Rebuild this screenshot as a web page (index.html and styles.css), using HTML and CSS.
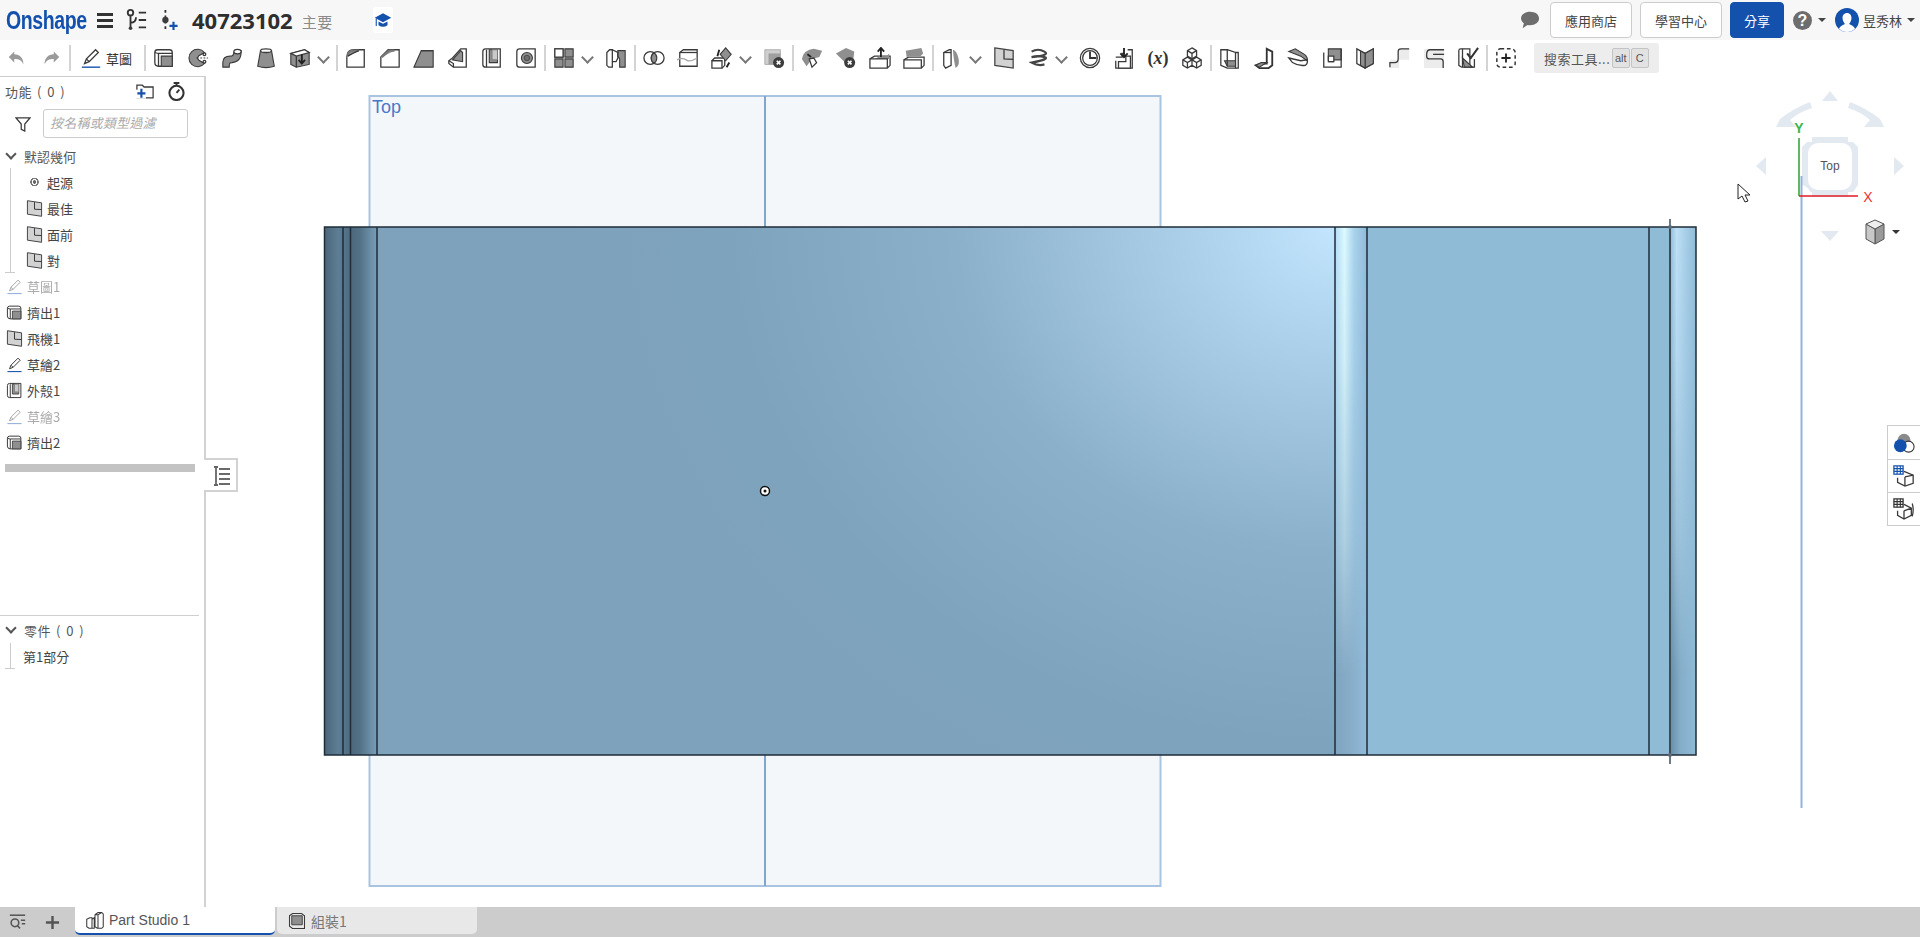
FILE: index.html
```html
<!DOCTYPE html>
<html lang="zh-Hant">
<head>
  <meta charset="UTF-8" />
  <title>40723102 - Part Studio 1</title>
  <link rel="stylesheet" href="styles.css">
</head>
<body>

  <!-- icon set -->
  <svg class="defs" width="0" height="0">
    <defs>
      <symbol id="i-undo" viewBox="0 0 24 24"><path class="g" d="M9 5 3 11l6 6v-4c5 0 8 1 10 6 0-7-4-11-10-11z"/></symbol>
      <symbol id="i-redo" viewBox="0 0 24 24"><path class="g" d="M15 5l6 6-6 6v-4c-5 0-8 1-10 6 0-7 4-11 10-11z"/></symbol>
      <symbol id="i-pencil" viewBox="0 0 24 24"><path class="o" d="M5 18 7 13 17 3l3 3L10 16z"/><path class="o" d="M7 13l3 3"/><path class="blue" d="M2 22h20"/></symbol>
      <symbol id="i-extrude" viewBox="0 0 24 24"><path class="o" d="M2 6q0-3 3-3h13q3 0 3 3v15H6q-4 0-4-4z"/><path class="o" d="M2 6q3 1 4 1h15M6 7v14"/><path class="f" d="M9 10h12v11H9z"/></symbol>
      <symbol id="i-revolve" viewBox="0 0 24 24"><path class="f" d="M19 6A9.5 9.5 0 1 0 19 18L13 14.500 11 12 13 9.500z"/><path class="dash" d="M11 12h12"/><circle class="o" cx="19" cy="8" r="1.500"/><circle class="o" cx="19" cy="16" r="1.500"/></symbol>
      <symbol id="i-sweep" viewBox="0 0 24 24"><path class="f" d="M2 22v-5c0-6 4-7 8-7 3 0 4-1 4-4l8-2c0 9-3 12-10 13-3 0-3 1-3 5z"/><ellipse class="lt" cx="18" cy="5" rx="4" ry="2.500"/></symbol>
      <symbol id="i-loft" viewBox="0 0 24 24"><path class="f" d="M6 4 3 21q9 3 18 0L18 4z"/><ellipse class="lt" cx="12" cy="4" rx="6" ry="2"/></symbol>
      <symbol id="i-thicken" viewBox="0 0 24 24"><path class="f" d="M2 7l15-4 5 3v13l-14 3-6-3z"/><path class="lt" d="M2 7l6 3 14-4-5-3zM8 10v12"/><path class="k" d="M14 8v9M10.500 14l3.500 4 3.500-4"/></symbol>
      <symbol id="i-fillet" viewBox="0 0 24 24"><path class="o" d="M2 22V11q0-8 8-8h11v19z"/><path class="thick" d="M3 10q0-6 7-6h5"/><path class="o" d="M3 10q5-3 12-6"/></symbol>
      <symbol id="i-chamfer" viewBox="0 0 24 24"><path class="o" d="M2 22V11l8-8h12v19z"/><path class="thick" d="M3 11l8-7h6"/></symbol>
      <symbol id="i-draft" viewBox="0 0 24 24"><path class="f" d="M1 22 9 4h13v18z"/><path class="lt" d="M9 4h13"/></symbol>
      <symbol id="i-rib" viewBox="0 0 24 24"><path class="lt" d="M2 15l4-3 9-10h6v20H7l-5-4z"/><path class="f" d="M6 14 15 4l2 2v10z"/><path class="o" d="M2 15l5 3v4"/></symbol>
      <symbol id="i-shell" viewBox="0 0 24 24"><path class="lt" d="M2 5q0-3 3-3h16v20H5q-3 0-3-3z"/><path class="o" d="M6 3v19"/><path class="f" d="M9 3h9v14H9z"/><path class="inner" d="M12 3v11h6V3z"/></symbol>
      <symbol id="i-hole" viewBox="0 0 24 24"><path class="lt" d="M2 5q0-3 3-3h17v20H5q-3 0-3-3z"/><circle class="f" cx="13" cy="12" r="6"/><circle class="inner2" cx="13" cy="12" r="3"/></symbol>
      <symbol id="i-pattern" viewBox="0 0 24 24"><path class="f" d="M2 2h9v9H2zM13 2h9v9h-9zM2 13h9v9H2zM13 13h9v9h-9z"/><path class="lt" d="M2 2h9v9H2z"/></symbol>
      <symbol id="i-split" viewBox="0 0 24 24"><path class="lt" d="M2 6l3-3h3v19H4l-2-2z"/><path class="f" d="M14 4h8v18h-6v-9l-2-3z"/><path class="o" d="M8 3l6 3v6l-2 4h-4"/></symbol>
      <symbol id="i-bool" viewBox="0 0 24 24"><circle class="lt" cx="8" cy="12" r="7"/><circle class="lt" cx="16" cy="12" r="7"/><path class="f" d="M12 6.200a7 7 0 0 1 0 11.600 7 7 0 0 1 0-11.600z"/></symbol>
      <symbol id="i-splitsurf" viewBox="0 0 24 24"><path class="o" d="M3 6l4-3h15v18H3z"/><path class="o" d="M3 6h19"/><path class="wave" d="M0 14q6-3 10 0t12-2"/></symbol>
      <symbol id="i-transform" viewBox="0 0 24 24"><path class="lt" d="M1 15h11v8H1z"/><path class="o" d="M1 15l3-3h11v8l-3 3"/><path class="f" d="M16 1l6 7-6 7-6-7z"/><path class="k" d="M7 10l2-7M20 17l-3 5"/></symbol>
      <symbol id="i-delete" viewBox="0 0 24 24"><path class="lgf" d="M2 3h17v16H2z"/><path class="lgf2" d="M6 7h13v12H6z"/><circle class="kf" cx="17" cy="17" r="6"/><path class="x" d="M15 15l4 4M19 15l-4 4"/></symbol>
      <symbol id="i-surfmove" viewBox="0 0 24 24"><path class="g2" d="M1 13Q3 3 14 2l9 2-3 7-8 2-6 8z"/><path class="lt" d="M9 13l5-1 3 5-5 5z"/><path class="k" d="M7 8l4 3"/></symbol>
      <symbol id="i-surfdel" viewBox="0 0 24 24"><path class="g2" d="M1 7 12 1l9 4-1 9-9 3z"/><circle class="kf" cx="16" cy="17" r="6"/><path class="x" d="M14 15l4 4M18 15l-4 4"/></symbol>
      <symbol id="i-facemove" viewBox="0 0 24 24"><path class="lt" d="M1 13l5-3h17v10l-3 3H1z"/><path class="g2" d="M7 13l4-3h8l3-3v6z"/><path class="k" d="M13 11V1M9.500 5 13 1l3.500 4"/><path class="o" d="M1 13h19v10"/></symbol>
      <symbol id="i-surfoff" viewBox="0 0 24 24"><path class="lt" d="M1 14l5-3h17v9l-3 3H1z"/><path class="o" d="M1 14h19v9"/><path class="g2" d="M3 4l17-3 2 6-3 3H8l-4 1z"/></symbol>
      <symbol id="i-enclose" viewBox="0 0 24 24"><path class="lt" d="M3 6l6-3h2v17l-6 3-2-3z"/><path class="g2" d="M13 3q4 1 6 9t-3 11q-2-7-3-20z"/><path class="o" d="M3 6h8"/></symbol>
      <symbol id="i-plane" viewBox="0 0 24 24"><path class="lgp" d="M2 1l20 3v19L2 20z"/><path class="o" d="M12 3v10l10 .5"/></symbol>
      <symbol id="i-helix" viewBox="0 0 24 24"><path class="coil" d="M5 5q7-4 14 0t-14 6q7-2 14 0t-14 6q7 4 14 2"/></symbol>
      <symbol id="i-clock" viewBox="0 0 24 24"><circle class="o" cx="12" cy="12" r="10.500"/><circle class="o" cx="12" cy="12" r="8"/><path class="o2" d="M12 5v7h7"/></symbol>
      <symbol id="i-import" viewBox="0 0 24 24"><path class="o" d="M3 11h7V7h3M16 3h5v20H3v-8"/><path class="lt" d="M6 23v-7h8v-6h5v13z"/><path class="k" d="M12 1v10M8 7l4 4 4-4"/></symbol>
      <symbol id="i-cubes" viewBox="0 0 24 24"><path class="lt" d="M12 1l5 3v6l-5 3-5-3V4zM7 11l5 3v6l-5 3-5-3v-6zM17 11l5 3v6l-5 3-5-3v-6z"/><path class="o" d="M7 4l5 3 5-3M12 7v6M2 14l5 3 5-3M7 17v6M12 14l5 3 5-3M17 17v6"/></symbol>
      <symbol id="i-sheet" viewBox="0 0 24 24"><path class="lt" d="M2 3h7l9 3v17H9l-7-3z"/><path class="f" d="M6 15l3 6h9v-6z"/><path class="o" d="M9 3v18M18 6h3v17h-3"/></symbol>
      <symbol id="i-flange" viewBox="0 0 24 24"><path class="k2" d="M15 2l6 3v15l-4 3H7l-4-3 6-2h6z"/><path class="f" d="M3 20l6-3h6l-8 5z"/></symbol>
      <symbol id="i-hem" viewBox="0 0 24 24"><path class="f" d="M2 5l7-3 10 6q4 3 3 7l-7-5z"/><path class="o" d="M2 12l13 3 7-1q1 4-2 6-8 1-14-3z"/></symbol>
      <symbol id="i-tab" viewBox="0 0 24 24"><path class="f" d="M8 2h14v12H8z"/><path class="lt" d="M8 10h6v6H8z"/><path class="o" d="M3 6v16h19V2M8 16h6"/></symbol>
      <symbol id="i-bend" viewBox="0 0 24 24"><path class="lt" d="M2 2l9 5 9-5v16l-9 5-9-5z"/><path class="f" d="M11 7l9-5v16l-9 5z"/><path class="f" d="M6 4.500 11 7v16l-5-3z"/></symbol>
      <symbol id="i-jog" viewBox="0 0 24 24"><path class="bgl" d="M1 14h10v9H1zM11 2h11v12H11z"/><path class="o" d="M1 22v-5h5q4 0 4-4V5q0-3 3-3h9"/></symbol>
      <symbol id="i-corner" viewBox="0 0 24 24"><path class="bgl" d="M1 2h22v21H1z"/><path class="o" d="M23 3H8Q4 3 4 8v2q0 3 3 3h12q3 0 3 3v7"/><path class="o" d="M23 8H11"/></symbol>
      <symbol id="i-finish" viewBox="0 0 24 24"><path class="lt" d="M2 4q0-2 2-2h10v20H5l-3-2z"/><path class="f" d="M6 12l11 10h-9z"/><path class="o" d="M6 2v20M14 22h5v-9"/><path class="k3" d="M11 7l4 5 8-11"/></symbol>
      <symbol id="i-add" viewBox="0 0 24 24"><rect class="dashbox" x="2" y="2" width="20" height="20" rx="4"/><path class="k" d="M12 7v10M7 12h10"/></symbol>
      <symbol id="i-assembly" viewBox="0 0 24 24"><path class="o" d="M2 5l4-3h12l4 3v17H6l-4-3z"/><path class="f" d="M5 5h14v12H5z"/></symbol>
      <symbol id="i-studio" viewBox="0 0 24 24"><path class="o" d="M1 11l4-2h3v14H4l-3-2zM8 11l3-2v14H8M12 5l4-3h5l2 2v17l-2 2h-6l-3-2zM16 5v18M12 5h4l5-3"/></symbol>
    </defs>
  </svg>

  <header class="topbar">
    <span class="logo-box"><a class="logo">Onshape</a></span>
    <span class="burger"><i></i><i></i><i></i></span>
    <svg class="top-ic ic-branch" viewBox="0 0 24 24"><circle class="o2" cx="6" cy="4" r="3"/><path class="o2" d="M6 7v14M6 15q6 0 6-6"/><circle class="kf" cx="6" cy="21" r="2"/><path class="o2" d="M15 4h8M15 12h8M15 20h8"/></svg>
    <svg class="top-ic ic-version" viewBox="0 0 20 24"><path class="dash2" d="M6 1v22"/><circle class="kf" cx="6" cy="12" r="3.500"/><path class="plus" d="M15 14v9M10.500 18.500h9"/></svg>
    <span class="doc-title">40723102</span>
    <span class="doc-branch">主要</span>
    <span class="cap-tile">
      <svg viewBox="0 0 24 24"><path class="capf" d="M12 3 1 9l11 6 11-6zM6 14v5q6 4 12 0v-5l-6 3z"/><path class="capl" d="M3 10v10"/></svg>
    </span>

    <div class="top-right">
      <svg class="bubble" viewBox="0 0 24 22"><path class="kb" d="M12 1C5.500 1 1 4.500 1 9c0 2.500 1.500 4.500 3.500 6L3 21l6-4c1 .2 2 .3 3 .3 6.500 0 11-3.500 11-8.200S18.500 1 12 1z"/></svg>
      <button class="btn">應用商店</button>
      <button class="btn">學習中心</button>
      <button class="btn btn-share">分享</button>
      <span class="help">?</span>
      <span class="caret"></span>
      <svg class="avatar" viewBox="0 0 24 24"><circle class="av-b" cx="12" cy="12" r="12"/><path class="av-w" d="M12 5c-3 0-4.500 2.500-4.500 5s1.500 5 2.500 6c-2 1-5 2-6 4.500 2 2.500 5 3.500 8 3.500s6-1 8-3.500c-1-2.500-4-3.500-6-4.500 1-1 2.500-3.500 2.500-6S15 5 12 5z"/></svg>
      <span class="user">昱秀林</span>
      <span class="caret"></span>
    </div>
  </header>

  <nav class="toolbar">
    <span class="tool"><svg><use href="#i-undo"/></svg></span>
    <span class="tool"><svg><use href="#i-redo"/></svg></span>
    <span class="sep"></span>
    <span class="tool-sketch"><svg><use href="#i-pencil"/></svg><span>草圖</span></span>
    <span class="sep"></span>
    <span class="tool"><svg><use href="#i-extrude"/></svg></span>
    <span class="tool"><svg><use href="#i-revolve"/></svg></span>
    <span class="tool"><svg><use href="#i-sweep"/></svg></span>
    <span class="tool"><svg><use href="#i-loft"/></svg></span>
    <span class="tool"><svg><use href="#i-thicken"/></svg></span>
    <span class="chev"></span>
    <span class="sep"></span>
    <span class="tool"><svg><use href="#i-fillet"/></svg></span>
    <span class="tool"><svg><use href="#i-chamfer"/></svg></span>
    <span class="tool"><svg><use href="#i-draft"/></svg></span>
    <span class="tool"><svg><use href="#i-rib"/></svg></span>
    <span class="tool"><svg><use href="#i-shell"/></svg></span>
    <span class="tool"><svg><use href="#i-hole"/></svg></span>
    <span class="sep"></span>
    <span class="tool"><svg><use href="#i-pattern"/></svg></span>
    <span class="chev"></span>
    <span class="tool"><svg><use href="#i-split"/></svg></span>
    <span class="sep"></span>
    <span class="tool"><svg><use href="#i-bool"/></svg></span>
    <span class="tool"><svg><use href="#i-splitsurf"/></svg></span>
    <span class="tool"><svg><use href="#i-transform"/></svg></span>
    <span class="chev"></span>
    <span class="tool"><svg><use href="#i-delete"/></svg></span>
    <span class="sep"></span>
    <span class="tool"><svg><use href="#i-surfmove"/></svg></span>
    <span class="tool"><svg><use href="#i-surfdel"/></svg></span>
    <span class="tool"><svg><use href="#i-facemove"/></svg></span>
    <span class="tool"><svg><use href="#i-surfoff"/></svg></span>
    <span class="sep"></span>
    <span class="tool"><svg><use href="#i-enclose"/></svg></span>
    <span class="chev"></span>
    <span class="tool"><svg><use href="#i-plane"/></svg></span>
    <span class="tool"><svg><use href="#i-helix"/></svg></span>
    <span class="chev"></span>
    <span class="tool"><svg><use href="#i-clock"/></svg></span>
    <span class="tool"><svg><use href="#i-import"/></svg></span>
    <span class="tool var">(<i>x</i>)</span>
    <span class="tool"><svg><use href="#i-cubes"/></svg></span>
    <span class="sep"></span>
    <span class="tool"><svg><use href="#i-sheet"/></svg></span>
    <span class="tool"><svg><use href="#i-flange"/></svg></span>
    <span class="tool"><svg><use href="#i-hem"/></svg></span>
    <span class="tool"><svg><use href="#i-tab"/></svg></span>
    <span class="tool"><svg><use href="#i-bend"/></svg></span>
    <span class="tool"><svg><use href="#i-jog"/></svg></span>
    <span class="tool"><svg><use href="#i-corner"/></svg></span>
    <span class="tool"><svg><use href="#i-finish"/></svg></span>
    <span class="sep"></span>
    <span class="tool"><svg><use href="#i-add"/></svg></span>
    <div class="tool-search"><span class="search-label">搜索工具...</span><kbd>alt</kbd><kbd>C</kbd></div>
  </nav>

  <main class="workspace">
    <aside class="panel">
      <div class="panel-head">
        <span class="panel-title">功能 ( 0 )</span>
        <svg class="head-ic folder" viewBox="0 0 20 16"><path class="o" d="M1 15V1h6l2 2h10v12z"/><path class="whitef" d="M0 6h11v10H0z"/><path class="plus" d="M6 5v10M1.500 10h9"/></svg>
        <svg class="head-ic watch" viewBox="0 0 18 20"><path class="k2" d="M6 1h6M9 1v3"/><circle class="k3" cx="9" cy="11.500" r="7.500"/><path class="k2" d="M9 11.500 12 8"/></svg>
      </div>
      <div class="filter-row">
        <svg class="funnel" viewBox="0 0 18 18"><path class="o" d="M1 2h16l-6 7v8l-4-2V9z"/></svg>
        <div class="filter-box">按名稱或類型過濾</div>
      </div>

      <div class="tree-group">
        <div class="group-head"><span class="tw"></span>默認幾何</div>
        <div class="group-body">
          <div class="row sub"><span class="dot"></span>起源</div>
          <div class="row sub"><svg><use href="#i-plane"/></svg>最佳</div>
          <div class="row sub"><svg><use href="#i-plane"/></svg>面前</div>
          <div class="row sub"><svg><use href="#i-plane"/></svg>對</div>
        </div>
      </div>
      <div class="row off"><svg><use href="#i-pencil"/></svg>草圖1</div>
      <div class="row"><svg><use href="#i-extrude"/></svg>擠出1</div>
      <div class="row"><svg><use href="#i-plane"/></svg>飛機1</div>
      <div class="row"><svg><use href="#i-pencil"/></svg>草繪2</div>
      <div class="row"><svg><use href="#i-shell"/></svg>外殼1</div>
      <div class="row off"><svg><use href="#i-pencil"/></svg>草繪3</div>
      <div class="row"><svg><use href="#i-extrude"/></svg>擠出2</div>
      <div class="rollback"></div>

      <div class="parts">
        <div class="group-head"><span class="tw"></span>零件 ( 0 )</div>
        <div class="group-body short">
          <div class="row part-row">第1部分</div>
        </div>
      </div>

      <div class="panel-tab">
        <svg viewBox="0 0 20 20"><path class="tabic" d="M3 1h4M5 1v18M3 19h4"/><path class="o" d="M8 3h11M8 8h11M8 13h11M8 18h11"/></svg>
      </div>
    </aside>

    <section class="viewport">
      <svg class="scene" viewBox="206 76 1714 831">
        <defs>
          <linearGradient id="gStripA"><stop offset="0" stop-color="#4c6578"/><stop offset=".55" stop-color="#5d7e95"/><stop offset="1" stop-color="#4f6b7f"/></linearGradient>
          <linearGradient id="gStripB"><stop offset="0" stop-color="#4d677b"/><stop offset=".35" stop-color="#527085"/><stop offset="1" stop-color="#7a9eb9"/></linearGradient>
          <linearGradient id="gBendBase"><stop offset="0" stop-color="#7fa4bf"/><stop offset=".5" stop-color="#88adc9"/><stop offset="1" stop-color="#8fbbd7"/></linearGradient>
          <linearGradient id="gBendHi"><stop offset="0" stop-color="#b5dcf6"/><stop offset=".3" stop-color="#dcfaff"/><stop offset=".6" stop-color="#a9d2ec"/><stop offset="1" stop-color="#8fbbd7"/></linearGradient>
          <linearGradient id="gEndBase"><stop offset="0" stop-color="#688ea8"/><stop offset=".4" stop-color="#84adc8"/><stop offset="1" stop-color="#8fbbd7"/></linearGradient>
          <linearGradient id="gEndHi"><stop offset="0" stop-color="#8fbbd7"/><stop offset=".25" stop-color="#bde0f6"/><stop offset="1" stop-color="#8fbbd7"/></linearGradient>
          <linearGradient id="gFade" x1="0" y1="0" x2="0" y2="1"><stop offset="0" stop-color="#fff"/><stop offset=".25" stop-color="#ddd"/><stop offset=".6" stop-color="#777"/><stop offset=".85" stop-color="#000"/></linearGradient>
          <mask id="mFade" maskContentUnits="objectBoundingBox"><rect width="1" height="1" fill="url(#gFade)"/></mask>
          <radialGradient id="gShine" gradientUnits="userSpaceOnUse" cx="1335" cy="227" r="760" gradientTransform="translate(1335 227) scale(1 .85) translate(-1335 -227)">
            <stop offset="0" stop-color="#c3e5fe"/><stop offset=".2" stop-color="#abcfe9"/><stop offset=".5" stop-color="#8bb0ca"/><stop offset=".8" stop-color="#7ea3bc"/><stop offset="1" stop-color="#7ea2bc"/>
          </radialGradient>
        </defs>

        <rect class="plane" x="369.500" y="96" width="791" height="790"/>
        <line class="plane-mid" x1="765" y1="96" x2="765" y2="886"/>
        <text class="plane-label" x="372" y="113">Top</text>

        <rect fill="url(#gStripA)" x="324" y="227" width="26" height="528"/>
        <rect fill="url(#gStripB)" x="350" y="227" width="27" height="528"/>
        <rect fill="url(#gShine)" x="377" y="227" width="958" height="528"/>
        <rect fill="url(#gBendBase)" x="1335" y="227" width="32" height="528"/>
        <rect fill="url(#gBendHi)" mask="url(#mFade)" x="1335" y="227" width="32" height="528"/>
        <rect class="flat" x="1367" y="227" width="329" height="528"/>
        <rect fill="url(#gEndBase)" x="1670" y="227" width="26" height="528"/>
        <rect fill="url(#gEndHi)" mask="url(#mFade)" x="1670" y="227" width="26" height="528"/>

        <g class="edge">
          <path d="M324.500 227h1371.500v528H324.500z"/>
          <path d="M343 227v528M350.500 227v528M377 227v528M1335 227v528M1367 227v528M1649 227v528"/>
          <path class="axis-line" d="M1670 227v528"/>
          <path class="axis-tick" d="M1670 219v8M1670 755v9"/>
        </g>
        <circle class="tick" cx="1670" cy="227" r="2"/>
        <circle class="tick" cx="1670" cy="755" r="2"/>

        <circle class="origin-o" cx="765" cy="491" r="4.500"/>
        <circle class="origin-i" cx="765" cy="491" r="1.500"/>

        <!-- view cube -->
        <path class="cube-f" d="M1780 119q14-11 30-17l2 6q-13 4-22 12l6 7h-20z"/>
        <path class="cube-f" d="M1880 119q-14-11-30-17l-2 6q13 4 22 12l-6 7h20z"/>
        <path class="cube-f" d="M1830 91l8 10h-16zM1756 166l10-9v18zM1904 166l-10-9v18zM1830 241l-9-10h18z"/>
        <path class="cube-f" d="M1812 137h36v5h5l5 5v38l-5 7h-5v5h-36v-5h-5l-5-7v-38l5-5h5z"/>
        <rect class="cube-w" x="1808" y="143" width="44" height="47" rx="10"/>
        <path class="white-notch" d="M1800 196v-11a11 11 0 0 1 11 11z"/>
        <text class="cube-t" x="1830" y="170">Top</text>

        <line class="view-line" x1="1801.500" y1="176" x2="1801.500" y2="808"/>
        <line class="axis-y" x1="1799" y1="138" x2="1799" y2="196"/>
        <line class="axis-x" x1="1799" y1="196" x2="1858" y2="196"/>
        <text class="lbl-y" x="1799" y="133">Y</text>
        <text class="lbl-x" x="1868" y="202">X</text>

        <g class="minicube">
          <path class="mc-r" d="M1884 224v15l-9 5v-15z"/>
          <path class="mc-l" d="M1866 224v15l9 5v-15z"/>
          <path class="mc-t" d="M1875 220l9 4-9 5-9-5z"/>
        </g>
        <path class="mc-caret" d="M1892 230h8l-4 4z"/>

        <path class="cursor" d="M1738 184v15l4-3 3 6 3-1-3-6h5z"/>
      </svg>

      <div class="side-tabs">
        <span class="side-tab"><svg viewBox="0 0 24 24"><circle class="sgray" cx="12" cy="9" r="7"/><circle class="swhite" cx="17" cy="16" r="6"/><circle class="sblue" cx="8" cy="15" r="7"/></svg></span>
        <span class="side-tab"><svg viewBox="0 0 24 24"><path class="o" d="M12 7l10 4v9l-9 3-8-4v-5"/><path class="o" d="M13 13l9-2M13 13v10"/><path class="bluegrid" d="M1 1h10v9H1z"/><path class="gridl" d="M1 4h10M1 7h10M4.500 1v9M8 1v9"/></svg></span>
        <span class="side-tab"><svg viewBox="0 0 24 24"><path class="o" d="M12 7l8 4v8l-8 4-7-4v-5M12 14l8-3M12 14v9M21 6q2 7 0 14"/><path class="kgrid" d="M1 1h10v9H1z"/><path class="gridw" d="M1 4h10M1 7h10M4.500 1v9M8 1v9"/></svg></span>
      </div>
    </section>
  </main>

  <footer class="tabbar">
    <svg class="bar-ic search" viewBox="0 0 20 18"><path class="barl" d="M1 1h18"/><circle class="barl" cx="7" cy="10" r="4.500"/><path class="barl" d="M10 13.500l3 3M14 7h5M15 11h4"/></svg>
    <svg class="bar-ic addtab" viewBox="0 0 16 16"><path class="barp" d="M8 1v14M1 8h14"/></svg>
    <div class="tab active"><svg><use href="#i-studio"/></svg>Part Studio 1</div>
    <div class="tab"><svg><use href="#i-assembly"/></svg>組裝1</div>
  </footer>

</body>
</html>
```

FILE: styles.css
```css
* {
  box-sizing: border-box;
}

html, body {
  margin: 0;
  height: 100%;
  overflow: hidden;
}

body {
  display: flex;
  flex-direction: column;
  background: #fff;
  color: #444;
  font-family: "Liberation Sans", "Noto Sans CJK TC", sans-serif;
  font-size: 13px;
}

.defs {
  position: absolute;
}

/* shared icon paints */
.o { fill: none; stroke: #3a3a3a; stroke-width: 1.4; }
.o2 { fill: none; stroke: #333; stroke-width: 2; }
.f { fill: #8f8f8f; stroke: #3a3a3a; stroke-width: 1.2; }
.g { fill: #9a9a9a; }
.g2 { fill: #8f8f8f; }
.lt { fill: #fff; stroke: #3a3a3a; stroke-width: 1.4; }
.k { fill: none; stroke: #222; stroke-width: 2; }
.k2 { fill: none; stroke: #333; stroke-width: 2; }
.k3 { fill: none; stroke: #333; stroke-width: 2.200; }
.kf { fill: #3c3c3c; }
.kb { fill: #6d6d6d; }
.x { fill: none; stroke: #fff; stroke-width: 1.800; }
.blue { fill: none; stroke: #1351ad; stroke-width: 1.500; }
.plus { fill: none; stroke: #1351ad; stroke-width: 2.400; }
.thick { fill: #9a9a9a; stroke: #777; stroke-width: 2.500; }
.dash { fill: none; stroke: #444; stroke-width: 1.200; stroke-dasharray: 2 1.500; }
.dash2 { fill: none; stroke: #333; stroke-width: 2; stroke-dasharray: 3 3; }
.dashbox { fill: none; stroke: #333; stroke-width: 1.600; stroke-dasharray: 4 3; }
.inner { fill: #c9c9c9; stroke: #777; stroke-width: 1; }
.inner2 { fill: #6f6f6f; stroke: #444; stroke-width: 1; }
.lgf { fill: #cfcfcf; stroke: #aaa; stroke-width: 1; }
.lgf2 { fill: #9f9f9f; }
.lgp { fill: #d2d2d2; stroke: #444; stroke-width: 1.400; }
.wave { fill: none; stroke: #aaa; stroke-width: 1.500; }
.coil { fill: none; stroke: #444; stroke-width: 2.400; }
.bgl { fill: #ececec; }
.whitef { fill: #fff; }

/* top bar */
.topbar {
  height: 40px;
  flex: none;
  display: flex;
  align-items: center;
  background: #f7f7f7;
}

.logo-box {
  width: 78px;
  flex: none;
  margin-left: 6px;
  display: block;
}

.logo {
  display: inline-block;
  color: #1351ad;
  font-family: "Liberation Sans", sans-serif;
  font-size: 25px;
  font-weight: bold;
  letter-spacing: -0.5px;
  white-space: nowrap;
  transform: scaleX(.78);
  transform-origin: left center;
}

.burger {
  width: 16px;
  flex: none;
  margin-left: 13px;
  display: flex;
  flex-direction: column;
  gap: 3px;
}

.burger i {
  height: 3px;
  background: #333;
}

.top-ic {
  height: 22px;
  flex: none;
}

.ic-branch {
  width: 22px;
  margin-left: 12px;
}

.ic-version {
  width: 18px;
  margin-left: 13px;
}

.doc-title {
  margin-left: 14px;
  color: #2e2e2e;
  font-family: "Open Sans", sans-serif;
  font-size: 22px;
  font-weight: 700;
}

.doc-branch {
  margin-left: 9px;
  margin-top: 3px;
  color: #8a8a8a;
  font-family: "Noto Sans CJK TC", sans-serif;
  font-size: 15px;
  letter-spacing: .5px;
}

.cap-tile {
  width: 20px;
  height: 26px;
  margin-left: 40px;
  display: flex;
  align-items: center;
  background: #fff;
  border-radius: 3px;
}

.cap-tile svg {
  width: 20px;
  height: 18px;
}

.capf { fill: #1351ad; }
.capl { fill: none; stroke: #1351ad; stroke-width: 1.500; }

.top-right {
  margin-left: auto;
  height: 40px;
  display: flex;
  align-items: center;
}

.bubble {
  width: 20px;
  height: 18px;
  margin-right: 10px;
}

.btn {
  width: 82px;
  height: 36px;
  margin-right: 8px;
  padding: 0;
  background: #fff;
  border: 1px solid #ccc;
  border-radius: 4px;
  color: #444;
  font-family: "Noto Sans CJK TC", sans-serif;
  font-size: 13px;
}

.btn-share {
  width: 54px;
  background: #1351ad;
  border-color: #1351ad;
  color: #fff;
}

.help {
  width: 19px;
  height: 19px;
  flex: none;
  margin-left: 1px;
  background: #6d6d6d;
  border-radius: 50%;
  color: #fff;
  font-size: 16px;
  font-weight: bold;
  line-height: 19px;
  text-align: center;
}

.caret {
  width: 0;
  height: 0;
  margin-left: 6px;
  border-left: 4px solid transparent;
  border-right: 4px solid transparent;
  border-top: 4px solid #444;
}

.avatar {
  width: 24px;
  height: 24px;
  margin-left: 9px;
}

.av-b { fill: #1351ad; }
.av-w { fill: #fff; }

.user {
  margin-left: 4px;
  width: 40px;
  font-family: "Noto Sans CJK TC", sans-serif;
  font-size: 13px;
  white-space: nowrap;
}

.top-right .user + .caret {
  margin-right: 5px;
  margin-left: 4px;
}

/* toolbar */
.toolbar {
  height: 36px;
  flex: none;
  display: flex;
  align-items: center;
  background: #fff;
}

.tool {
  width: 34px;
  height: 36px;
  flex: none;
  display: flex;
  align-items: center;
  justify-content: center;
}

.tool svg {
  width: 22px;
  height: 22px;
}

.var {
  color: #333;
  font-family: "Liberation Serif", serif;
  font-size: 18px;
  font-weight: bold;
}

.sep {
  width: 2px;
  height: 26px;
  margin: 0 1px;
  flex: none;
  background: #d4d4d4;
}

.chev {
  width: 18px;
  height: 36px;
  flex: none;
  position: relative;
}

.chev::after {
  content: "";
  position: absolute;
  left: 2px;
  top: 13px;
  width: 7px;
  height: 7px;
  border-right: 2px solid #777;
  border-bottom: 2px solid #777;
  transform: rotate(45deg);
}

.tool-sketch {
  width: 71px;
  flex: none;
  display: flex;
  align-items: center;
  padding-left: 8px;
  gap: 4px;
  color: #333;
  font-family: "Noto Sans CJK TC", sans-serif;
  font-size: 13px;
}

.tool-sketch svg {
  width: 22px;
  height: 22px;
}

.tool-search {
  width: 125px;
  height: 30px;
  margin-left: 11px;
  flex: none;
  display: flex;
  align-items: center;
  padding-left: 10px;
  background: #ededed;
  border-radius: 3px;
  color: #555;
  font-family: "Noto Sans CJK TC", sans-serif;
  font-size: 13px;
}

.search-label {
  width: 67px;
  flex: none;
  letter-spacing: .5px;
  white-space: nowrap;
}

.tool-search kbd {
  height: 20px;
  min-width: 16px;
  margin-left: 1px;
  padding: 0 2px;
  background: #e2e2e2;
  border: 1px solid #c4c4c4;
  border-radius: 2px;
  font-family: "Liberation Sans", sans-serif;
  font-size: 11px;
  line-height: 18px;
  text-align: center;
}

.tool-search kbd + kbd {
  min-width: 18px;
}

/* feature panel */
.workspace {
  flex: 1;
  display: flex;
  min-height: 0;
}

.panel {
  width: 206px;
  flex: none;
  position: relative;
  border-top: 1px solid #ccc;
  border-right: 2px solid #d2d2d2;
  font-family: "Noto Sans CJK TC", sans-serif;
  font-size: 13px;
}

.panel-head {
  height: 28px;
  display: flex;
  align-items: center;
  padding-left: 5px;
}

.panel-title {
  width: 131px;
  word-spacing: 2px;
  letter-spacing: .4px;
  color: #555;
}

.head-ic.folder {
  width: 18px;
  height: 15px;
}

.head-ic.watch {
  width: 17px;
  height: 19px;
  margin-left: 14px;
}

.filter-row {
  height: 29px;
  margin-top: 4px;
  display: flex;
  align-items: center;
}

.funnel {
  width: 16px;
  height: 16px;
  margin-left: 15px;
}

.filter-box {
  width: 145px;
  height: 29px;
  margin-left: 12px;
  padding-left: 6px;
  background: #fff;
  border: 1px solid #ccc;
  border-radius: 3px;
  color: #aaa;
  font-size: 13px;
  font-style: italic;
  line-height: 26px;
  letter-spacing: .2px;
}

.group-head {
  height: 26px;
  display: flex;
  align-items: center;
  padding-left: 5px;
  color: #555;
  white-space: pre;
}

.tree-group {
  margin-top: 5px;
}

.tw {
  width: 8px;
  height: 8px;
  margin: -4px 9px 0 2px;
  border-right: 2px solid #555;
  border-bottom: 2px solid #555;
  transform: rotate(45deg);
}

.parts .group-head {
  word-spacing: 2px;
  letter-spacing: .4px;
}

.group-body {
  position: relative;
}

/* tree guide line and its foot */
.group-body::before {
  content: "";
  position: absolute;
  left: 10px;
  top: -1px;
  bottom: 0;
  width: 1px;
  background: #ccc;
}

.group-body::after {
  content: "";
  position: absolute;
  left: 5px;
  bottom: 0;
  width: 10px;
  height: 1px;
  background: #ccc;
}

.row {
  height: 26px;
  display: flex;
  align-items: center;
  gap: 4px;
  padding-left: 6px;
  color: #444;
}

.row svg {
  width: 17px;
  height: 17px;
  flex: none;
}

.row.sub {
  padding-left: 26px;
}

.row.off {
  opacity: .45;
}

.dot {
  width: 17px;
  height: 16px;
  flex: none;
  background: radial-gradient(circle, #666 0 1.500px, #fff 2px 2.800px, #777 3px 4px, transparent 4.500px);
}

.rollback {
  height: 8px;
  width: 190px;
  margin: 9px 0 0 5px;
  background: #c3c3c3;
}

.parts {
  margin-top: 143px;
  border-top: 1px solid #d0d0d0;
  margin-right: 5px;
  padding-top: 1px;
}

.part-row {
  padding-left: 23px;
}

.group-body.short::before {
  top: 0;
}

.panel-tab {
  position: absolute;
  left: 204px;
  top: 381px;
  width: 34px;
  height: 34px;
  padding: 6px 7px;
  background: #fff;
  border: 2px solid #d2d2d2;
  border-left: none;
}

.panel-tab svg {
  display: block;
  width: 20px;
  height: 20px;
}

.tabic {
  fill: none;
  stroke: #666;
  stroke-width: 1.800;
}

/* 3d view */
.viewport {
  flex: 1;
  position: relative;
  min-width: 0;
}

.scene {
  display: block;
  width: 100%;
  height: 100%;
}

.plane { fill: #f4f7fa; stroke: #a9c4e0; stroke-width: 2; }
.plane-mid { stroke: #7fa6d0; stroke-width: 2; }
.plane-label { fill: #4a78c8; font-family: "Liberation Sans", sans-serif; font-size: 18px; }
.flat { fill: #8fbbd7; }
.edge { fill: none; stroke: #1f2d38; stroke-width: 1.500; }
.axis-line { stroke: #3d4c58; stroke-width: 2; }
.axis-tick { stroke: #6b7a85; stroke-width: 2; }
.tick { fill: #5c6a76; }
.origin-o { fill: #fff; stroke: #111; stroke-width: 1.500; }
.origin-i { fill: #111; }
.cube-f { fill: #e3e9f0; }
.cube-w { fill: #fff; }
.white-notch { fill: #fff; }
.cube-t { fill: #555; font-family: "Liberation Sans", sans-serif; font-size: 12px; text-anchor: middle; }
.view-line { stroke: #94b3dc; stroke-width: 2; }
.axis-y { stroke: #2ea02e; stroke-width: 1.500; }
.axis-x { stroke: #e01b24; stroke-width: 1.500; }
.lbl-y { fill: #3db54a; font-family: "Liberation Sans", sans-serif; font-size: 14px; font-weight: bold; text-anchor: middle; }
.lbl-x { fill: #e8333a; font-family: "Liberation Sans", sans-serif; font-size: 14px; text-anchor: middle; }
.minicube path { stroke: #555; stroke-width: 1; }
.mc-t { fill: #eee; }
.mc-l { fill: #c8c8c8; }
.mc-r { fill: #9a9a9a; }
.mc-caret { fill: #333; }
.cursor { fill: #fff; stroke: #222; stroke-width: 1; }

.side-tabs {
  position: absolute;
  right: 0;
  top: 349px;
  width: 33px;
  display: flex;
  flex-direction: column;
  background: #fff;
  border: 1px solid #ccc;
  border-right: none;
}

.side-tab {
  height: 33px;
  display: flex;
  align-items: center;
  justify-content: center;
}

.side-tab + .side-tab {
  border-top: 1px solid #ccc;
}

.side-tab svg {
  width: 22px;
  height: 22px;
}

.sgray { fill: #8a8a8a; }
.swhite { fill: #fff; stroke: #333; stroke-width: 1.200; }
.sblue { fill: #1351ad; }
.bluegrid { fill: #fff; stroke: #1351ad; stroke-width: 1.400; }
.gridl { fill: none; stroke: #1351ad; stroke-width: 1.200; }
.kgrid { fill: #fff; stroke: #333; stroke-width: 1.400; }
.gridw { fill: none; stroke: #333; stroke-width: 1.200; }

/* tabs at the bottom */
.tabbar {
  height: 30px;
  flex: none;
  display: flex;
  align-items: flex-start;
  background: #ccc;
}

.bar-ic {
  flex: none;
  align-self: center;
}

.bar-ic.search {
  width: 17px;
  height: 16px;
  margin-left: 9px;
}

.bar-ic.addtab {
  width: 15px;
  height: 15px;
  margin-left: 19px;
  margin-right: 15px;
}

.barl { fill: none; stroke: #555; stroke-width: 1.800; }
.barp { fill: none; stroke: #555; stroke-width: 2.600; }

.tab {
  width: 200px;
  height: 27px;
  margin-right: 2px;
  display: flex;
  align-items: center;
  padding-left: 11px;
  gap: 5px;
  background: #e8e8e8;
  border-radius: 0 0 5px 5px;
  color: #777;
  font-family: "Noto Sans CJK TC", sans-serif;
  font-size: 14px;
}

.tab.active {
  height: 28px;
  background: #fff;
  border-bottom: 2px solid #1351ad;
  color: #555;
  font-family: "Liberation Sans", "Noto Sans CJK TC", sans-serif;
}

.tab svg {
  width: 18px;
  height: 18px;
  flex: none;
}
```
